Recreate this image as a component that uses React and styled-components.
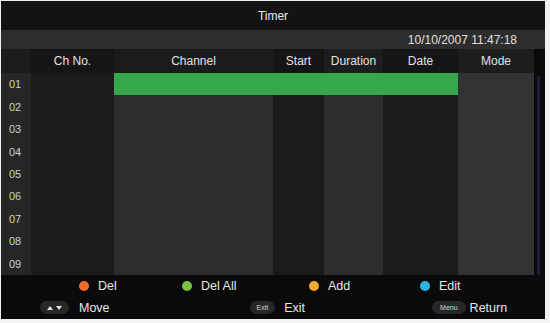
import styled, { createGlobalStyle } from "styled-components";

const Global = createGlobalStyle`
  html, body {
    margin: 0;
    padding: 0;
    background: #f2f2f2;
  }
  body {
    font-family: "Liberation Sans", Arial, sans-serif;
  }
`;

const COLS = "30px 83px 159px 51px 59px 75px 76px 11px";

const Screen = styled.div`
  width: 544px;
  height: 318px;
  margin: 1px 0 0 1px;
  background: #0a0a0a;
  display: flex;
  flex-direction: column;
  overflow: hidden;
  color: #e6e6e6;
`;

const TitleBar = styled.div`
  height: 29px;
  background: #121312;
  display: flex;
  align-items: center;
  justify-content: center;
  font-size: 12px;
  color: #ececec;
`;

const DateBar = styled.div`
  height: 19px;
  background: #2d2d2d;
  display: flex;
  align-items: center;
  justify-content: flex-end;
  padding-right: 28px;
  font-size: 12px;
  color: #e0e0e0;
`;

const Table = styled.div`
  display: grid;
  grid-template-columns: ${COLS};
  grid-template-rows: 24px repeat(9, 22.45px);
`;

const HeadCell = styled.div`
  background: ${(p) => p.$bg};
  display: flex;
  align-items: center;
  justify-content: center;
  font-size: 12px;
  color: #e2e2e2;
`;

const Cell = styled.div`
  background: ${(p) => p.$bg};
`;

const RowNum = styled.div`
  background: #262626;
  display: flex;
  align-items: center;
  padding-left: 8px;
  font-size: 11px;
  color: #cfcfcf;
`;

const Selected = styled.div`
  grid-column: 3 / 7;
  background: #35a84b;
`;

const ScrollTrack = styled.div`
  grid-column: 8;
  grid-row: 2 / 11;
  background: #0a0a0a;
  display: flex;
  justify-content: center;
  padding: 3px 0 0;
`;

const ScrollThumb = styled.div`
  width: 3px;
  height: 100%;
  background: #1c1c3e;
  margin-left: -3px;
`;

const Legend = styled.div`
  height: 22px;
  display: grid;
  grid-template-columns: 78px 103px 127px 111px 1fr;
  align-items: center;
  font-size: 12.5px;
  color: #e8e8e8;
`;

const LegendItem = styled.div`
  grid-column: ${(p) => p.$col};
  display: flex;
  align-items: center;
  gap: 9px;
`;

const Dot = styled.span`
  width: 10px;
  height: 10px;
  border-radius: 50%;
  background: ${(p) => p.$color};
`;

const Nav = styled.div`
  height: 22px;
  display: flex;
  align-items: center;
  font-size: 12.5px;
  color: #e8e8e8;
`;

const NavItem = styled.div`
  display: flex;
  align-items: center;
  gap: ${(p) => p.$gap || 10}px;
  margin-left: ${(p) => p.$left}px;
`;

const Key = styled.span`
  height: 13px;
  padding: 0 ${(p) => p.$pad || 8}px;
  border-radius: 7px;
  background: #272727;
  color: #d8d8d8;
  font-size: 7px;
  display: flex;
  align-items: center;
  gap: 3px;
`;

const Arrow = styled.span`
  width: 0;
  height: 0;
  border-left: 3.5px solid transparent;
  border-right: 3.5px solid transparent;
  ${(p) =>
    p.$up
      ? "border-bottom: 4px solid #e0e0e0;"
      : "border-top: 4px solid #e0e0e0;"}
`;

const headers = [
  ["", "#1c1c1c"],
  ["Ch No.", "#151515"],
  ["Channel", "#1b1b1b"],
  ["Start", "#151515"],
  ["Duration", "#1d1d1d"],
  ["Date", "#151515"],
  ["Mode", "#1d1d1d"],
  ["", "#0a0a0a"],
];

const bodyColors = ["#1a1b1a", "#2c2c2c", "#1a1a1a", "#2d2d2d", "#1a1a1a", "#333333"];

export default function App() {
  const rows = ["01", "02", "03", "04", "05", "06", "07", "08", "09"];
  return (
    <>
      <Global />
      <Screen>
        <TitleBar>Timer</TitleBar>
        <DateBar>10/10/2007 11:47:18</DateBar>
        <Table>
          {headers.map(([t, bg], i) => (
            <HeadCell key={i} $bg={bg}>
              {t}
            </HeadCell>
          ))}
          {rows.map((r, ri) => [
            <RowNum key={r}>{r}</RowNum>,
            ri === 0
              ? [
                  <Cell key={r + "c"} $bg={bodyColors[0]} />,
                  <Selected key={r + "s"} />,
                  <Cell key={r + "m"} $bg={bodyColors[5]} />,
                ]
              : bodyColors.map((bg, ci) => <Cell key={r + ci} $bg={bg} />),
            ri === 0 ? (
              <ScrollTrack key="scroll">
                <ScrollThumb />
              </ScrollTrack>
            ) : null,
          ])}
        </Table>
        <Legend>
          <LegendItem $col={2}>
            <Dot $color="#f06a2c" />
            Del
          </LegendItem>
          <LegendItem $col={3}>
            <Dot $color="#7ac142" />
            Del All
          </LegendItem>
          <LegendItem $col={4}>
            <Dot $color="#f2a92e" />
            Add
          </LegendItem>
          <LegendItem $col={5}>
            <Dot $color="#2bb5e3" />
            Edit
          </LegendItem>
        </Legend>
        <Nav>
          <NavItem $left={39} $gap={10}>
            <Key $pad={7}>
              <Arrow $up />
              <Arrow />
            </Key>
            Move
          </NavItem>
          <NavItem $left={140} $gap={9}>
            <Key $pad={7}>Exit</Key>
            Exit
          </NavItem>
          <NavItem $left={127} $gap={4}>
            <Key $pad={8}>Menu</Key>
            Return
          </NavItem>
        </Nav>
      </Screen>
    </>
  );
}
